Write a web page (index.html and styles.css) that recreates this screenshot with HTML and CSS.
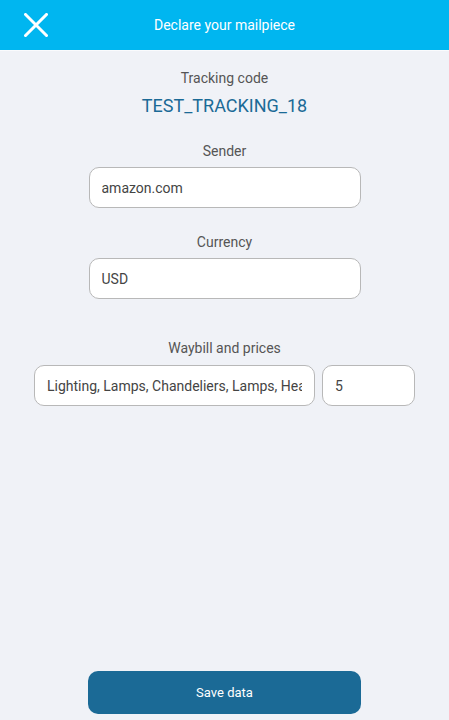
FILE: index.html
```html
<!DOCTYPE html>
<html lang="en">
<head>
    <meta charset="UTF-8">
    <meta name="viewport" content="width=device-width, initial-scale=1.0">
    <title>Declare your mailpiece</title>
    <link rel="stylesheet" href="styles.css">
</head>
<body>
    <!-- Barre du haut -->
    <header class="topbar">
        <button class="close-btn" aria-label="Close">
            <svg width="24" height="24" viewBox="0 0 24 24">
                <path d="M1.5 1.5 L22.5 22.5 M22.5 1.5 L1.5 22.5" stroke="#fff" stroke-width="3" stroke-linecap="square"/>
            </svg>
        </button>
        <span class="topbar-title">Declare your mailpiece</span>
    </header>

    <main class="content">
        <div class="label">Tracking code</div>
        <div class="tracking">TEST_TRACKING_18</div>

        <div class="label label-field">Sender</div>
        <input type="text" class="field" value="amazon.com">

        <div class="label label-field">Currency</div>
        <input type="text" class="field" value="USD">

        <div class="label label-waybill">Waybill and prices</div>
        <div class="waybill-row">
            <input type="text" class="field field-goods" value="Lighting, Lamps, Chandeliers, Lamps, Headlights">
            <input type="text" class="field field-price" value="5">
        </div>
    </main>

    <footer class="footer">
        <button class="save-btn">Save data</button>
    </footer>
</body>
</html>
```

FILE: styles.css
```css
body {
    margin: 0;
    height: 100vh;
    display: flex;
    flex-direction: column;
    background-color: #f0f2f7;
    font-family: Roboto, "Noto Sans", Arial, sans-serif;
    color: #555;
}

/* Barre du haut */
.topbar {
    height: 50px;
    flex-shrink: 0;
    display: flex;
    align-items: center;
    position: relative;
    background-color: #00b6f0;
    border-bottom: 1px solid #fafbfd;
}

.close-btn {
    margin-left: 24px;
    padding: 0;
    border: none;
    background: none;
    display: flex;
    cursor: pointer;
}

.topbar-title {
    position: absolute;
    left: 0;
    right: 0;
    text-align: center;
    color: #fff;
    font-size: 14px;
    pointer-events: none;
}

/* Contenu */
.content {
    flex: 1;
    display: flex;
    flex-direction: column;
    align-items: center;
    padding-top: 17px;
}

.label {
    font-size: 14px;
    line-height: 20px;
}

.tracking {
    margin-top: 6px;
    font-size: 18px;
    line-height: 24px;
    color: #1b6a96;
}

.label-field {
    margin-top: 23px;
    margin-bottom: 6px;
}

.field + .label-field {
    margin-top: 24px;
}

.label-waybill {
    margin-top: 39px;
    margin-bottom: 7px;
}

.field {
    width: 272px;
    height: 41px;
    box-sizing: border-box;
    padding: 0 12px;
    border: 1px solid #b8b8b8;
    border-radius: 10px;
    background: #fff;
    font-family: inherit;
    font-size: 14px;
    color: #444;
    outline: none;
}

.waybill-row {
    display: flex;
    gap: 7px;
}

.field-goods {
    width: 281px;
}

.field-price {
    width: 93px;
}

/* Bouton du bas */
.footer {
    display: flex;
    justify-content: center;
    padding-bottom: 6px;
}

.save-btn {
    width: 273px;
    height: 43px;
    border: none;
    border-radius: 10px;
    background-color: #1b6a96;
    color: #fff;
    font-family: inherit;
    font-size: 13px;
    cursor: pointer;
}
```
